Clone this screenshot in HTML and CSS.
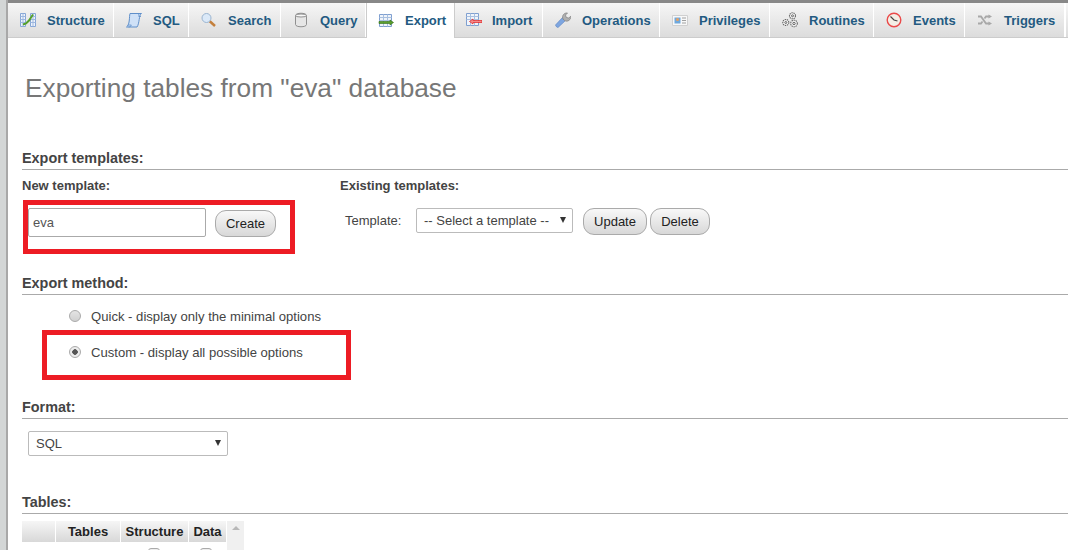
FILE: index.html
```html
<!DOCTYPE html>
<html lang="en">

<head>
    <meta charset="UTF-8">
    <title>Export</title>
    <link rel="stylesheet" href="styles.css">
</head>

<body>
    <div class="strip"></div>
    <div class="page">
        <ul class="tabs">
            <li class="tab tab-structure">
                <svg class="icon" viewBox="0 0 16 16">
                    <path d="M0.500 1.500h5v13h-5zM10.500 1.500h5v13h-5z" fill="#eef3fb" stroke="#86a6d6" />
                    <path d="M0.500 4.500h5M0.500 7.500h5M0.500 10.500h5M10.500 4.500h5M10.500 7.500h5M10.500 10.500h5M3 1.500v13M13 1.500v13" stroke="#9db8e0" />
                    <path d="M3 12.500l3-1 3-3 2-3 2-3" fill="none" stroke="#55a02a" stroke-width="2" />
                </svg>
                Structure
            </li>
            <li class="tab tab-sql">
                <svg class="icon" viewBox="0 0 16 16">
                    <path d="M4 1.500h11.500c-1.500 1-1.800 3-2.300 6s-1 6-2.200 7.500H0.500c1.500-1 2.300-3 2.700-6S3.500 3 4 1.500z" fill="#cfe1f7" stroke="#5f8fca" />
                    <path d="M12 1.500c1 .5 1 1.500 .8 3h2.200M2.500 15c1.300 0 2.500-.5 2.800-2H1.800" fill="none" stroke="#5f8fca" stroke-width="0.800" />
                </svg>
                SQL
            </li>
            <li class="tab tab-search">
                <svg class="icon" viewBox="0 0 16 16">
                    <path d="M8.500 9l5.500 5" stroke="#c4803c" stroke-width="2.500" />
                    <circle cx="5.500" cy="6" r="4.500" fill="#dbe9f8" stroke="#9ab4d0" />
                </svg>
                Search
            </li>
            <li class="tab tab-query">
                <svg class="icon" viewBox="0 0 16 16">
                    <path d="M2.500 3.500c0-3 11-3 11 0v9c0 3-11 3-11 0z" fill="#e6e6e6" stroke="#909090" />
                    <ellipse cx="8" cy="3.500" rx="5.500" ry="1.500" fill="#f8f8f8" stroke="#909090" />
                </svg>
                Query
            </li>
            <li class="tab tab-export active">
                <svg class="icon" viewBox="0 0 16 16">
                    <path d="M1.500 1.500h12v12h-12z" fill="#f0f4fa" stroke="#7f9fd0" />
                    <path d="M1.500 4.500h12M1.500 7.500h12M5.500 1.500v12M9.500 1.500v12" stroke="#a9c0e0" />
                    <path d="M1 8.500h11v-1.500l3.500 2.500-3.500 2.500v-1.500H1z" fill="#5a9e2e" stroke="#2f6d12" stroke-width="0.600" />
                </svg>
                Export
            </li>
            <li class="tab tab-import">
                <svg class="icon" viewBox="0 0 16 16">
                    <path d="M0.500 1.500h12v12h-12z" fill="#f0f4fa" stroke="#7f9fd0" />
                    <path d="M0.500 4.500h12M0.500 7.500h12M4.500 1.500v12M8.500 1.500v12" stroke="#a9c0e0" />
                    <path d="M16 8.500H7v-1.500l-3.500 2.500 3.500 2.500v-1.500h9z" fill="#f58a8a" stroke="#e02020" stroke-width="0.700" />
                </svg>
                Import
            </li>
            <li class="tab tab-operations">
                <svg class="icon" viewBox="0 0 16 16">
                    <path d="M3 15.500c-1 0-2.500-1.500-2.500-2.500l7-7.500 3 3z" fill="#7ea6e0" stroke="#5580c0" stroke-width="0.600" />
                    <path d="M8 7c-1.500-3 1-6.500 4.500-6l-2 2 .8 2.500 2.500 .5 2-1.800c.3 3.500-3 6-6 4.500z" fill="#b0b0b0" stroke="#808080" stroke-width="0.700" />
                </svg>
                Operations
            </li>
            <li class="tab tab-privileges">
                <svg class="icon" viewBox="0 0 16 16">
                    <path d="M0.500 3.500h15v10h-15z" fill="#f8f8f8" stroke="#d0d0d0" />
                    <path d="M2.500 5.500h6v6h-6z" fill="#6fa8dc" />
                    <circle cx="5.500" cy="7.500" r="1.500" fill="#e8a060" />
                    <path d="M10 6h4M10 8.500h4M10 11h4" stroke="#a0a0a0" />
                </svg>
                Privileges
            </li>
            <li class="tab tab-routines">
                <svg class="icon" viewBox="0 0 16 16">
                    <g fill="#f4f4f4" stroke="#666" stroke-width="1.100" stroke-dasharray="1.400 0.700">
                        <circle cx="10.500" cy="3.800" r="3" />
                        <circle cx="3.800" cy="10.500" r="3" />
                        <circle cx="12" cy="11.500" r="3.300" />
                    </g>
                    <g fill="none" stroke="#666">
                        <circle cx="10.500" cy="3.800" r="1" />
                        <circle cx="3.800" cy="10.500" r="1" />
                        <circle cx="12" cy="11.500" r="1.200" />
                    </g>
                </svg>
                Routines
            </li>
            <li class="tab tab-events">
                <svg class="icon" viewBox="0 0 16 16">
                    <circle cx="8" cy="8" r="6.800" fill="#f4efe6" stroke="#ea4a4a" stroke-width="1.400" />
                    <path d="M4.500 4.500L8 8l3.500 1" fill="none" stroke="#444" stroke-width="1.200" />
                </svg>
                Events
            </li>
            <li class="tab tab-triggers">
                <svg class="icon" viewBox="0 0 16 16">
                    <path d="M1 4.500h3l5 7H12M1 11.500h3l1.500-2M7.500 6.500l1.500-2H12" fill="none" stroke="#a8a8a8" stroke-width="1.800" />
                    <path d="M11.500 2.500l3.500 2-3.500 2zM11.500 9.500l3.500 2-3.500 2z" fill="#a8a8a8" />
                </svg>
                Triggers
            </li>
            <li class="tab tab-more"></li>
        </ul>

        <div class="content">
            <h2 class="title">Exporting tables from "eva" database</h2>

            <h3 class="section">Export templates:</h3>
            <div class="templates">
                <div class="new-template">
                    <div class="sub-label">New template:</div>
                    <div class="row row-new">
                        <input class="text-input" type="text" value="eva">
                        <button class="btn btn-create">Create</button>
                    </div>
                </div>
                <div class="existing-template">
                    <div class="sub-label">Existing templates:</div>
                    <div class="row row-existing">
                        <span class="plain-label">Template:</span>
                        <div class="select select-template">-- Select a template --<span class="caret"></span></div>
                        <button class="btn btn-update">Update</button>
                        <button class="btn btn-delete">Delete</button>
                    </div>
                </div>
            </div>

            <h3 class="section section-method">Export method:</h3>
            <div class="radio-row radio-quick"><span class="radio"></span>Quick - display only the minimal options</div>
            <div class="radio-row radio-custom"><span class="radio checked"></span>Custom - display all possible options</div>

            <h3 class="section">Format:</h3>
            <div class="select select-format">SQL<span class="caret"></span></div>

            <h3 class="section section-tables">Tables:</h3>
            <div class="table-wrap">
                <div class="table-head">
                    <div class="th th-blank"></div>
                    <div class="th th-tables">Tables</div>
                    <div class="th th-structure">Structure</div>
                    <div class="th th-data">Data</div>
                </div>
                <div class="scrollbar"><span class="scroll-arrow"></span></div>
                <span class="check check-a"></span>
                <span class="check check-b"></span>
            </div>
        </div>
    </div>

    <div class="mark mark-template"></div>
    <div class="mark mark-custom"></div>
</body>

</html>
```

FILE: styles.css
```css
html,
body {
    margin: 0;
    padding: 0;
    height: 550px;
    overflow: hidden;
    background: #fff;
}

body {
    display: flex;
    font-family: "Liberation Sans", Arial, sans-serif;
    font-size: 13px;
    color: #444;
    position: relative;
}

.strip {
    flex: 0 0 8px;
    box-sizing: border-box;
    background: #d3d6d6;
    border-right: 2px solid #a8a8a8;
}

.page {
    flex: 1;
    min-width: 0;
}

.tabs {
    display: flex;
    margin: 0;
    padding: 0;
    list-style: none;
    height: 38px;
    box-sizing: border-box;
    border-top: 3px solid #888;
    border-bottom: 1px solid #ccc;
    background: linear-gradient(#f6f6f6, #dcdcdc);
}

.tab {
    display: flex;
    align-items: center;
    box-sizing: border-box;
    height: 34px;
    padding-left: 12px;
    font-size: 13px;
    font-weight: bold;
    color: #235a81;
    border-right: 1px solid #fff;
    white-space: nowrap;
}

.icon {
    width: 16px;
    height: 16px;
    margin-right: 11px;
    flex: none;
}

.tab-structure { width: 106px; }
.tab-sql { width: 75px; }
.tab-search { width: 92px; }
.tab-query { width: 85px; }
.tab-export { width: 89px; padding-left: 11px; }
.tab-import { width: 88px; padding-left: 11px; }
.tab-import .icon { margin-right: 10px; }
.tab-operations { width: 117px; }
.tab-privileges { width: 110px; }
.tab-routines { width: 104px; }
.tab-events { width: 91px; }
.tab-triggers { width: 100px; }
.tab-more { flex: 1; padding: 0; border-left: 1px solid #fff; border-right: 0; }

.active {
    height: 35px;
    background: #fff;
    border-right: 1px solid #ccc;
    border-left: 1px solid #ccc;
}

.content {
    padding-left: 14px;
}

.title {
    margin: 0;
    padding: 33px 0 0 3px;
    height: 79px;
    font-size: 26.250px;
    font-weight: normal;
    line-height: 34px;
    color: #777;
}

.section {
    margin: 0;
    font-size: 14.400px;
    font-weight: bold;
    line-height: 16px;
    color: #444;
    border-bottom: 1px solid #aaa;
    padding-bottom: 3px;
}

.section-method { margin-top: 38px; }
.section-tables { margin-top: 38px; }

.templates {
    display: flex;
}

.new-template {
    width: 318px;
}

.sub-label {
    font-size: 13px;
    font-weight: bold;
    line-height: 15px;
    margin-top: 8px;
}

.row {
    display: flex;
    align-items: flex-start;
}

.row-new {
    margin: 15px 0 0 6px;
}

.row-existing {
    margin: 15px 0 0 5px;
}

.text-input {
    width: 178px;
    height: 29px;
    box-sizing: border-box;
    border: 1px solid #aaa;
    border-radius: 2px;
    padding: 0 4px;
    font: 13px "Liberation Sans", Arial, sans-serif;
    color: #555;
    background: #fff;
}

.btn {
    box-sizing: border-box;
    height: 27px;
    padding: 0;
    border: 1px solid #aaa;
    border-radius: 11px;
    background: linear-gradient(#f8f8f8, #d8d8d8);
    font: 13px "Liberation Sans", Arial, sans-serif;
    color: #222;
}

.btn-create {
    width: 61px;
    margin: 2px 0 0 9px;
}

.btn-update {
    width: 64px;
    margin-left: 10px;
}

.btn-delete {
    width: 60px;
    margin-left: 3px;
}

.plain-label {
    width: 71px;
    line-height: 26px;
}

.select {
    position: relative;
    box-sizing: border-box;
    border: 1px solid #bbb;
    border-radius: 2px;
    background: #fff;
    padding-left: 7px;
    color: #444;
}

.select-template {
    width: 157px;
    height: 25px;
    line-height: 23px;
}

.select-format {
    width: 200px;
    height: 25px;
    line-height: 23px;
    margin: 12px 0 0 6px;
}

/* the little down arrow of a select */
.caret {
    position: absolute;
    right: 6px;
    top: 8px;
    border-left: 3.500px solid transparent;
    border-right: 3.500px solid transparent;
    border-top: 6px solid #333;
}

.radio-row {
    display: flex;
    align-items: center;
    height: 36px;
    padding-left: 47px;
    font-size: 13.100px;
    color: #444;
}

.radio-quick { margin-top: 3px; }
.radio-custom { margin-bottom: 29px; }

.radio {
    box-sizing: border-box;
    width: 12px;
    height: 12px;
    margin-right: 10px;
    border: 1px solid #aaa;
    border-radius: 50%;
    background: linear-gradient(#e4e4e4, #d0d0d0);
}

.checked {
    background: radial-gradient(circle, #555 0, #555 2.500px, #ececec 3px);
}

.table-wrap {
    position: relative;
    display: flex;
    margin-top: 7px;
}

.table-head {
    display: flex;
    gap: 1px;
}

.th {
    box-sizing: border-box;
    height: 21px;
    line-height: 21px;
    text-align: center;
    font-size: 13px;
    font-weight: bold;
    color: #222;
    background: linear-gradient(#f6f6f6, #d8d8d8);
}

.th-blank { width: 33px; }
.th-tables { width: 64px; }
.th-structure { width: 67px; }
.th-data { width: 37px; }

.scrollbar {
    position: relative;
    width: 17px;
    height: 29px;
    margin-left: 1px;
    background: #f0f0f0;
}

.scroll-arrow {
    position: absolute;
    left: 5px;
    top: 5px;
    border-left: 4px solid transparent;
    border-right: 4px solid transparent;
    border-bottom: 4px solid #b8b8b8;
}

.check {
    position: absolute;
    top: 27px;
    width: 10px;
    height: 10px;
    border: 1px solid #aaa;
    border-radius: 3px;
    background: #eee;
}

.check-a { left: 126px; }
.check-b { left: 178px; }

/* red annotation boxes drawn over the screenshot */
.mark {
    position: absolute;
    box-sizing: border-box;
    border: 5px solid #ed1c24;
}

.mark-template {
    left: 23px;
    top: 200px;
    width: 272px;
    height: 54px;
}

.mark-custom {
    left: 42px;
    top: 330px;
    width: 309px;
    height: 50px;
}
```
